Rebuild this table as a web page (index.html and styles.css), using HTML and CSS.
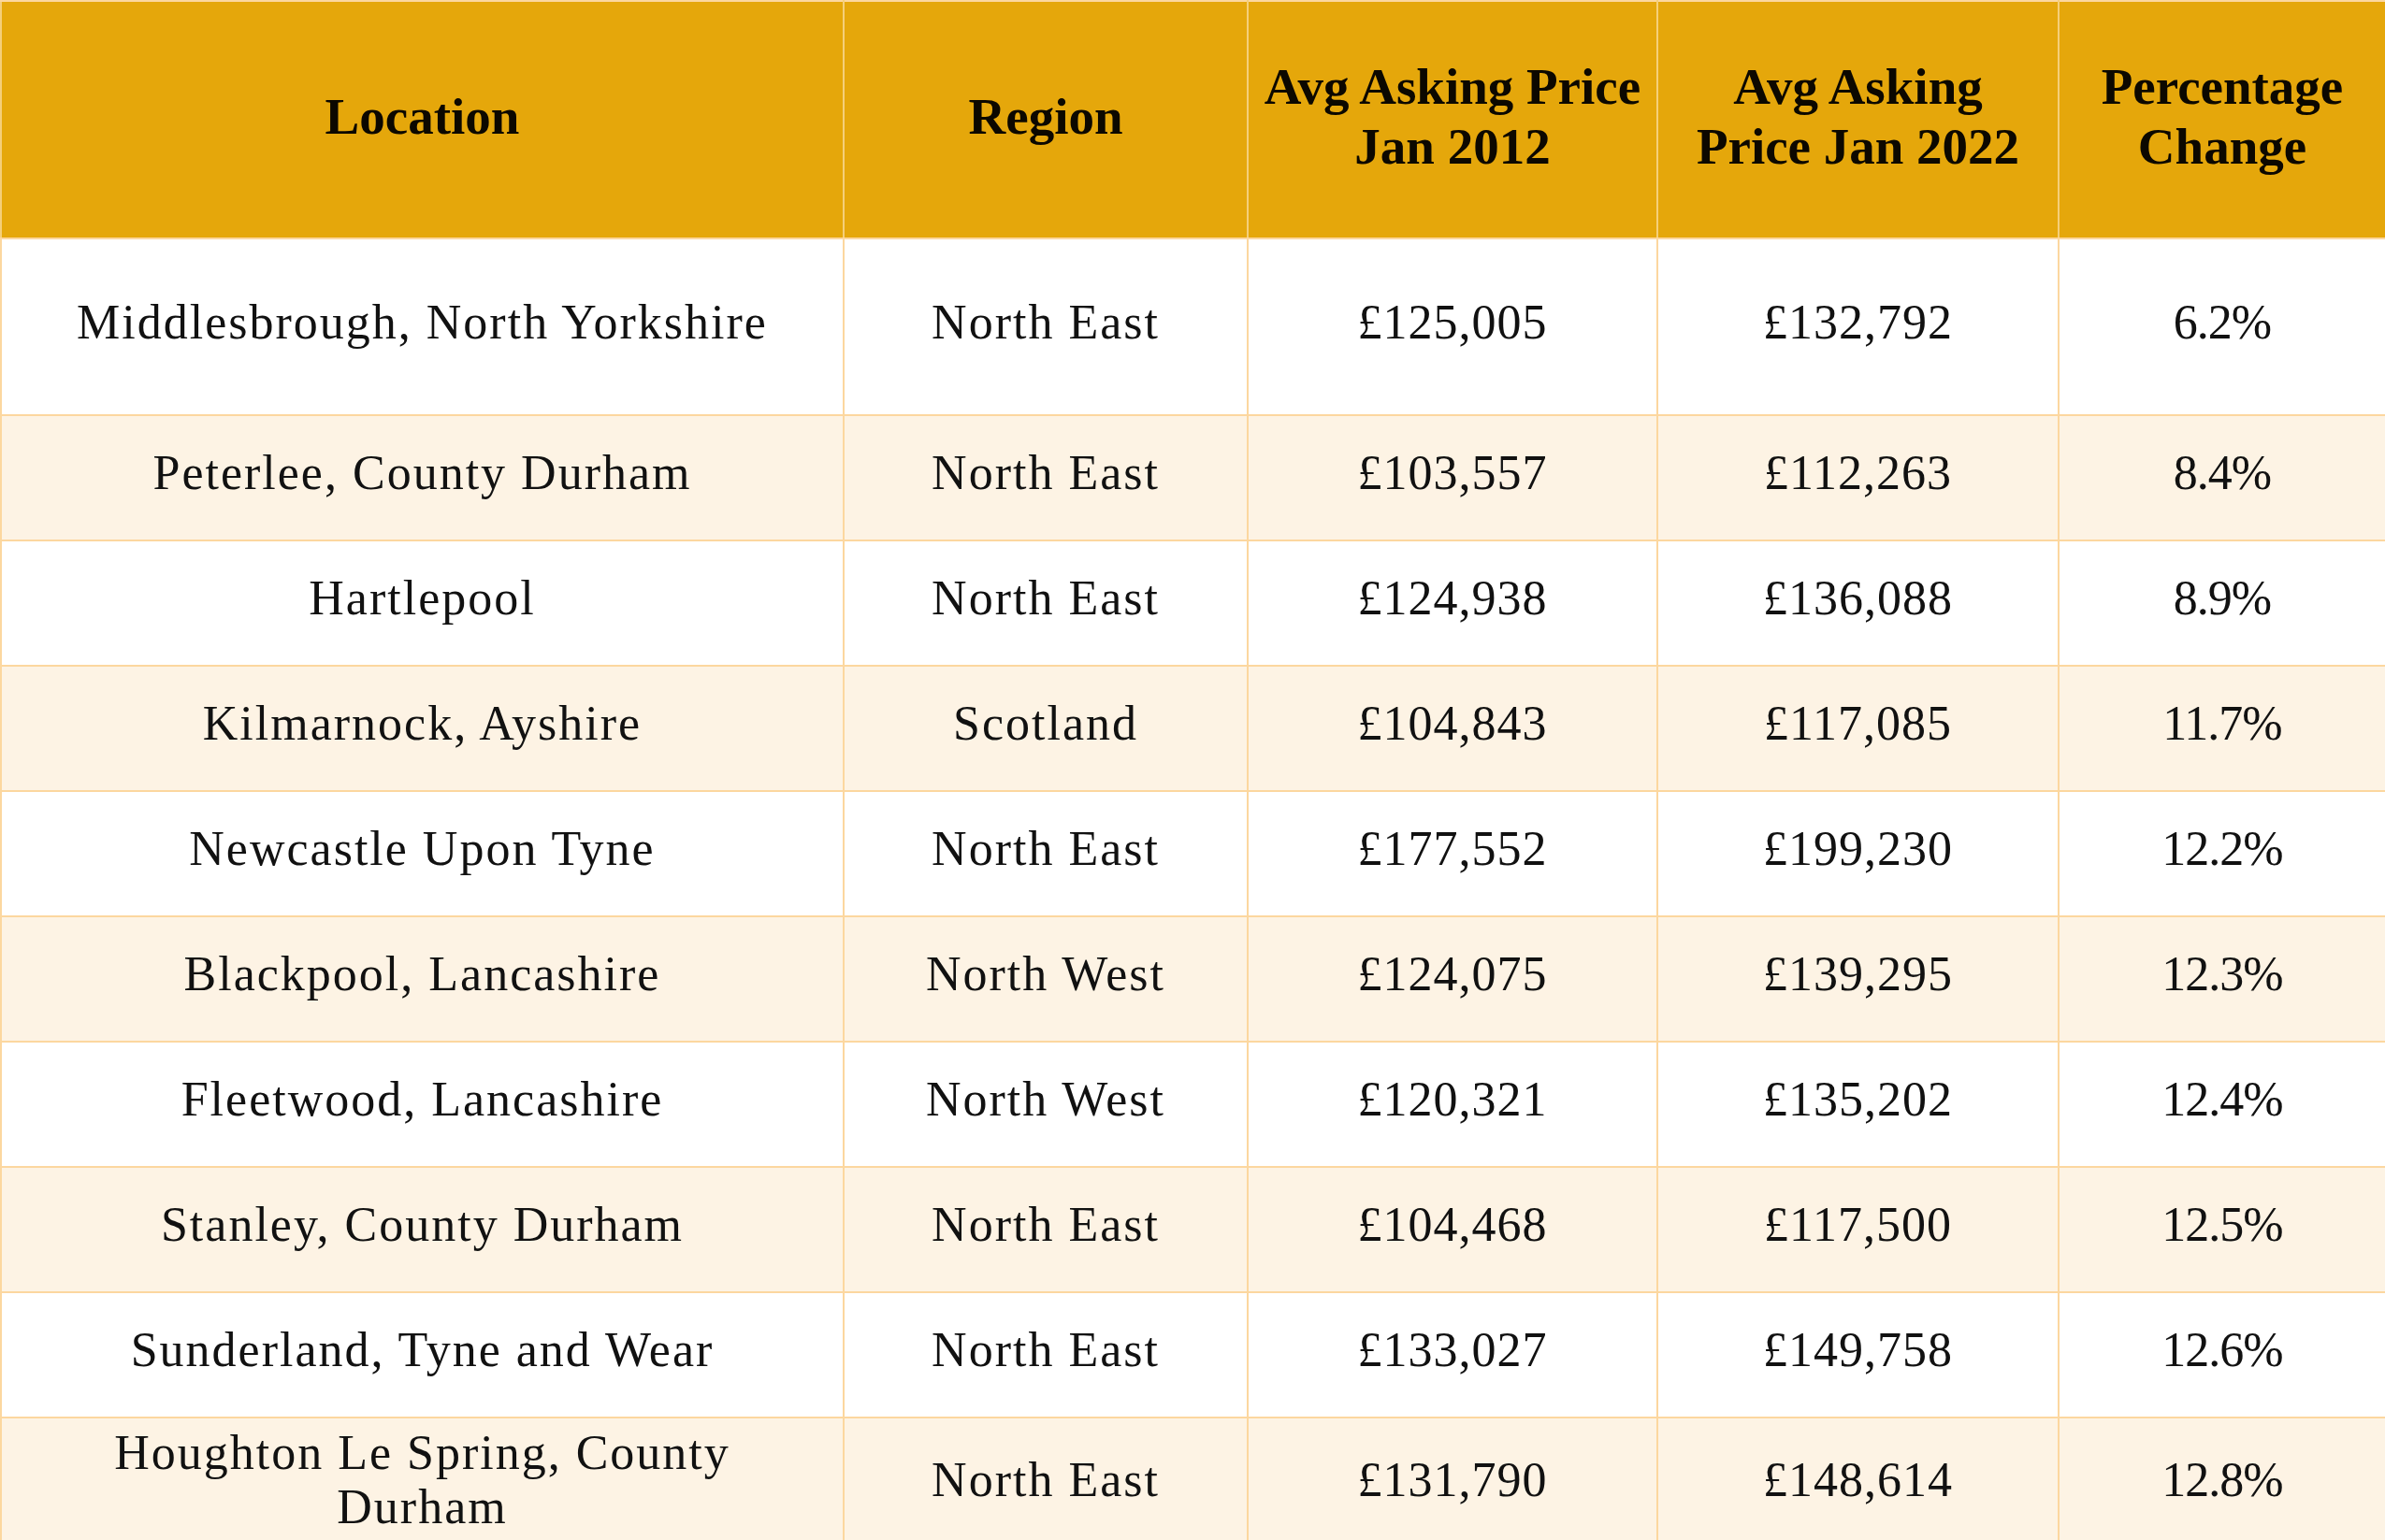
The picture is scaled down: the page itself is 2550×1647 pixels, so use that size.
FILE: index.html
```html
<!DOCTYPE html>
<html lang="en">
<head>
<meta charset="utf-8">
<title>Asking prices</title>
<link rel="stylesheet" href="styles.css">
</head>
<body>
<table class="prices">
  <colgroup>
    <col class="c-loc"><col class="c-reg"><col class="c-p1"><col class="c-p2"><col class="c-pct">
  </colgroup>
  <thead>
    <tr class="head">
      <th>Location</th>
      <th>Region</th>
      <th>Avg Asking Price<br>Jan 2012</th>
      <th>Avg Asking<br>Price Jan 2022</th>
      <th>Percentage<br>Change</th>
    </tr>
  </thead>
  <tbody>
    <tr class="first"><td class="loc">Middlesbrough, North Yorkshire</td><td>North East</td><td class="num">£125,005</td><td class="num">£132,792</td><td class="pct">6.2%</td></tr>
    <tr><td class="loc">Peterlee, County Durham</td><td>North East</td><td class="num">£103,557</td><td class="num">£112,263</td><td class="pct">8.4%</td></tr>
    <tr><td class="loc">Hartlepool</td><td>North East</td><td class="num">£124,938</td><td class="num">£136,088</td><td class="pct">8.9%</td></tr>
    <tr><td class="loc">Kilmarnock, Ayshire</td><td>Scotland</td><td class="num">£104,843</td><td class="num">£117,085</td><td class="pct">11.7%</td></tr>
    <tr><td class="loc">Newcastle Upon Tyne</td><td>North East</td><td class="num">£177,552</td><td class="num">£199,230</td><td class="pct">12.2%</td></tr>
    <tr><td class="loc">Blackpool, Lancashire</td><td>North West</td><td class="num">£124,075</td><td class="num">£139,295</td><td class="pct">12.3%</td></tr>
    <tr><td class="loc">Fleetwood, Lancashire</td><td>North West</td><td class="num">£120,321</td><td class="num">£135,202</td><td class="pct">12.4%</td></tr>
    <tr><td class="loc">Stanley, County Durham</td><td>North East</td><td class="num">£104,468</td><td class="num">£117,500</td><td class="pct">12.5%</td></tr>
    <tr><td class="loc">Sunderland, Tyne and Wear</td><td>North East</td><td class="num">£133,027</td><td class="num">£149,758</td><td class="pct">12.6%</td></tr>
    <tr class="tall"><td class="loc">Houghton Le Spring, County Durham</td><td>North East</td><td class="num">£131,790</td><td class="num">£148,614</td><td class="pct">12.8%</td></tr>
  </tbody>
</table>
</body>
</html>
```
FILE: styles.css
```css
html, body {
  margin: 0;
  padding: 0;
  background: #ffffff;
}

.prices {
  width: 2550px;
  border-collapse: collapse;
  table-layout: fixed;
  font-family: "Liberation Serif", "Times New Roman", serif;
  color: #111111;
}

.c-loc { width: 901px; }
.c-reg { width: 432px; }
.c-p1 { width: 438px; }
.c-p2 { width: 429px; }
.c-pct { width: 350px; }

.prices th,
.prices td {
  border: 2px solid #fcd79f;
  text-align: center;
  vertical-align: middle;
  padding: 0 12px 10px;
}

.head th {
  height: 246px;
  background: #e5a70b;
  font-weight: bold;
  font-size: 55px;
  line-height: 64px;
  color: #0c0800;
  padding: 0 6px 6px;
  border-top-color: #fcd79f;
  border-left-color: #f5cf7a;
  border-right-color: #f5cf7a;
  border-bottom-color: #fcd79f;
}

.prices td {
  height: 122px;
  font-size: 52px;
  line-height: 58px;
  letter-spacing: 2px;
}

.prices td.loc {
  padding: 0 64px 10px;
}

.prices td.num {
  letter-spacing: 1px;
}

.prices td.pct {
  letter-spacing: -1px;
}

.prices tr.first td {
  height: 177px;
}

.prices tr.tall td {
  height: 132px;
}

.prices tbody tr:nth-child(even) td {
  background: #fdf3e4;
}
```
